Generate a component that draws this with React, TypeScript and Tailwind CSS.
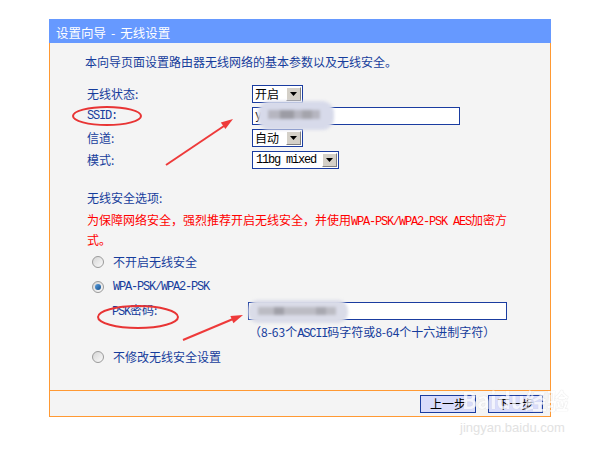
import React from "react";

function DropArrow() {
  return (
    <span className="ml-auto mr-[1px] flex h-[14px] w-[15px] items-center justify-center border border-t-[#fff] border-l-[#fff] border-b-[#808080] border-r-[#808080] bg-[#d4d0c8]">
      <svg width="7" height="4" viewBox="0 0 7 4">
        <path d="M0 0 H7 L3.5 4 Z" fill="#000" />
      </svg>
    </span>
  );
}

function Select({ text, w, mono }: { text: string; w: string; mono?: boolean }) {
  return (
    <div className={`flex h-[18px] items-center border border-[#1a3ca0] bg-white text-black ${w}`}>
      <span
        className={
          mono
            ? "pl-[3px] font-['Liberation_Mono',monospace] tracking-[-1.2px] leading-[16px]"
            : "pl-[2px] leading-[16px]"
        }
      >
        {text}
      </span>
      <DropArrow />
    </div>
  );
}

function Radio({ checked }: { checked?: boolean }) {
  return (
    <span className="flex h-[12px] w-[12px] items-center justify-center rounded-full border border-[#9a9a9a] bg-gradient-to-br from-[#d6d6d6] to-[#fafafa]">
      {checked && (
        <span className="h-[6px] w-[6px] rounded-full bg-gradient-to-br from-[#5aa0e0] to-[#134f8c]" />
      )}
    </span>
  );
}

const mono = "font-['Liberation_Mono',monospace] tracking-[-1.2px]";

export default function App() {
  return (
    <div className="relative h-[450px] w-[600px] overflow-hidden bg-white pl-[49px] pt-[19px] font-['Noto_Sans_CJK_SC',sans-serif] text-[12px]">
      <div className="w-[502px]">
        <div className="h-[24px] bg-[#6699ff] pl-[7px] pt-[4px] text-[12.5px] leading-[20px] text-white">
          设置向导<span className="px-[5px]">-</span>无线设置
        </div>
        <div className="h-[347px] border-x border-[#ff9933] bg-[#f4f4f4] pt-[11px] text-[#163d9c]">
          <div className="pl-[35px] leading-[16px]">本向导页面设置路由器无线网络的基本参数以及无线安全。</div>

          <div className="mt-[13px] grid grid-cols-[165px_1fr] pl-[37px]">
            <div className="flex h-[22px] items-center">无线状态:</div>
            <div className="flex h-[22px] items-center">
              <Select text="开启" w="w-[51px]" />
            </div>
            <div className="flex h-[22px] items-center">
              <span className={mono}>SSID:</span>
            </div>
            <div className="flex h-[22px] items-center">
              <div className="flex h-[18px] w-[208px] items-center border border-[#1a3ca0] bg-white pl-[2px] text-black">
                <span className={mono}>y</span>
              </div>
            </div>
            <div className="flex h-[22px] items-center">信道:</div>
            <div className="flex h-[22px] items-center">
              <Select text="自动" w="w-[51px]" />
            </div>
            <div className="flex h-[22px] items-center">模式:</div>
            <div className="flex h-[22px] items-center">
              <Select text="11bg mixed" w="w-[87px]" mono />
            </div>
          </div>

          <div className="mt-[19px] pl-[37px] leading-[16px]">无线安全选项:</div>
          <div className="mt-[5px] pl-[37px] leading-[18px] text-[#ff0000]">
            <div>
              为保障网络安全，强烈推荐开启无线安全，并使用<span className={mono}>WPA-PSK/WPA2-PSK AES</span>加密方
            </div>
            <div>式。</div>
          </div>

          <div className="mt-[3px] flex h-[20px] items-center gap-[9px] pl-[42px]">
            <Radio />
            <span>不开启无线安全</span>
          </div>
          <div className="mt-[5px] flex h-[20px] items-center gap-[9px] pl-[42px]">
            <Radio checked />
            <span className={mono}>WPA-PSK/WPA2-PSK</span>
          </div>
          <div className="mt-[4px] flex h-[19px] items-center pl-[62px]">
            <span className="w-[136px]">
              <span className={mono}>PSK</span>密码:
            </span>
            <div className="h-[18px] w-[259px] border border-[#1a3ca0] bg-white" />
          </div>
          <div className="mt-[4px] pl-[199px] leading-[16px]">
            （8-63个<span className={mono}>ASCII</span>码字符或8-64个十六进制字符）
          </div>
          <div className="mt-[5px] flex h-[20px] items-center gap-[9px] pl-[42px]">
            <Radio />
            <span>不修改无线安全设置</span>
          </div>
        </div>
        <div className="flex h-[27px] items-center justify-end gap-[12px] border border-[#ff9933] bg-[#f4f4f4] pr-[7px]">
          <button className="h-[18px] w-[56px] border border-[#1a3ca0] bg-[#d9dcfb] text-[12px] leading-[16px] text-black">
            上一步
          </button>
          <button className="h-[18px] w-[55px] border border-[#1a3ca0] bg-[#d9dcfb] text-[12px] leading-[16px] text-black">
            下一步
          </button>
        </div>
      </div>

      {/* blurred SSID */}
      <div className="pointer-events-none absolute left-[258px] top-[101px] h-[29px] w-[76px] rounded-[12px] bg-[#d7daea] blur-[1.5px]">
        <div className="absolute left-[10px] top-[9px] h-[9px] w-[52px] bg-[#b6b6c0]" />
        <div className="absolute left-[22px] top-[9px] h-[9px] w-[14px] bg-[#9c9ca4]" />
        <div className="absolute left-[44px] top-[9px] h-[9px] w-[10px] bg-[#a4a4ac]" />
      </div>
      {/* blurred PSK */}
      <div className="pointer-events-none absolute left-[248px] top-[300px] h-[23px] w-[100px] rounded-[10px] bg-[#dadce8] blur-[1.5px]">
        <div className="absolute left-[10px] top-[7px] h-[8px] w-[78px] bg-[#bcbcc4]" />
        <div className="absolute left-[26px] top-[7px] h-[8px] w-[10px] bg-[#a0a0a8]" />
        <div className="absolute left-[68px] top-[7px] h-[8px] w-[10px] bg-[#a8a8b0]" />
      </div>

      {/* annotations */}
      <svg className="pointer-events-none absolute left-0 top-0" width="600" height="450" viewBox="0 0 600 450">
        <ellipse cx="107" cy="116" rx="34" ry="9" fill="none" stroke="#e83434" strokeWidth="2" />
        <ellipse cx="138" cy="317" rx="40" ry="11" fill="none" stroke="#e83434" strokeWidth="2" />
        <line x1="166" y1="165" x2="224" y2="126" stroke="#ee3a3a" strokeWidth="2" />
        <polygon points="233,119 225.4,129.1 220.8,122.5" fill="#ee3a3a" />
        <line x1="183" y1="340" x2="233" y2="319" stroke="#ee3a3a" strokeWidth="2" />
        <polygon points="243,315 233.4,323.3 230.4,315.9" fill="#ee3a3a" />
      </svg>

      {/* watermark */}
      <div className="pointer-events-none absolute left-[462px] top-[386px] text-[22px] font-bold leading-[26px] text-[#ffffff] opacity-70 [text-shadow:0_0_1px_#bbb]">
        Baidu经验
      </div>
      <div className="pointer-events-none absolute left-[460px] top-[420px] font-['Liberation_Sans',sans-serif] text-[13px] leading-[16px] text-[#e2e2e2]">
        jingyan.baidu.com
      </div>
    </div>
  );
}
